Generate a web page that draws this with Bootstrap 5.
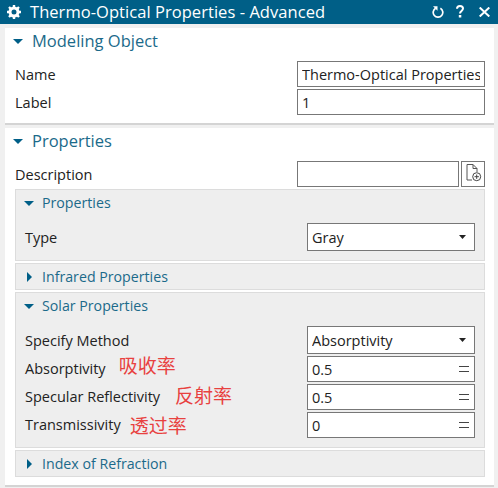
<!DOCTYPE html>
<html lang="en">
<head>
<meta charset="utf-8">
<title>Thermo-Optical Properties - Advanced</title>
<link href="https://cdn.jsdelivr.net/npm/bootstrap@5.3.0/dist/css/bootstrap.min.css" rel="stylesheet">
<style>
html,body{height:488px;overflow:hidden}
body{background:#f0f0f0;font-family:"Open Sans","Noto Sans","Liberation Sans",sans-serif;font-size:14.5px;line-height:20px;color:#222}
.tbar{height:24px;background:#005f87;color:#fff;font-size:16.5px;letter-spacing:.05px;padding:0 8px 1px 7px}
.tbar .ttl{margin-left:9px}
.tools{margin-left:auto}
.t-help{margin-left:12px}
.t-close{margin-left:15px}
.panel{background:#fff;margin:4px 4px 0 5px;border-bottom:2px solid #d4d4d4;padding:0 9px 0 10px}
.head{color:#1b6a8a;font-size:16.5px;height:26px}
.p1{height:97px}
.p2{height:359px;margin-top:3px}
.tri{margin-right:9px;margin-left:-2px;flex:none}
.sub{background:#eeeeee;border:1px solid #dcdcdc;padding:0 9px;margin-bottom:2px}
.sub.top{margin-top:2px}
.sub .head{font-size:14.2px;height:26px}
.sub .head.shut{height:25px}
.sub .tri{margin-left:-1px;margin-right:8px}
.sub .tri.side{margin-left:2px;margin-right:10px}
.line{height:28px;margin-top:7px}
.fld{height:26px;margin-top:2px}
.fld.first{margin-top:7px}
.endrow{margin-bottom:9px}
.form-control.ctl,.form-select.ctl{border:1px solid #777;border-radius:0;font-size:14.5px;line-height:20px;color:#222;padding:0 4px;height:26px;box-shadow:none;background-color:#fff}
.wide{width:188px;flex:none}
.mid{width:168px;flex:none}
.desc{width:162px;flex:none}
.form-select.ctl{height:28px;padding:1px 20px 0 4px;background-image:url("data:image/svg+xml,%3Csvg xmlns='http://www.w3.org/2000/svg' width='7' height='4'%3E%3Cpath d='M0 0h7L3.500 4z' fill='%23222'/%3E%3C/svg%3E");background-position:right 8px center;background-size:7px 4px}
.docbtn{width:24px;height:26px;border:1px solid #777;margin-left:2px;background:#fff;padding:0;flex:none}
.eqw{position:relative}
.eqmark{position:absolute;right:6px;top:10px;width:10px;height:6px;border-top:1px solid #444;border-bottom:1px solid #444}
.note{color:#e8413f;font-family:"Noto Sans CJK SC",sans-serif;font-size:19px;line-height:0;position:relative}
.n1{margin-left:13px;top:-1px}
.n2{margin-left:15px;top:1px}
.n3{margin-left:9px;top:3px}
.lbl{flex:1 1 auto;min-width:0}
.low{padding-top:2px}
</style>
</head>
<body>
<div class="tbar d-flex align-items-center">
  <svg width="14" height="14" viewBox="0 0 14 14"><circle cx="7" cy="7" r="4" fill="none" stroke="#fff" stroke-width="3"/><g stroke="#fff" stroke-width="2.4"><path d="M7 0v2.500M7 11.500V14M0 7h2.500M11.500 7H14M2 2l1.800 1.800M10.200 10.200L12 12M12 2l-1.800 1.800M3.800 10.200L2 12"/></g></svg>
  <span class="ttl">Thermo-Optical Properties - Advanced</span>
  <div class="tools d-flex align-items-center">
    <svg width="12" height="12" viewBox="0 0 12 12"><path d="M3.600 2.200A4.800 4.800 0 1 0 8.400 2.200" fill="none" stroke="#fff" stroke-width="1.700"/><path d="M1 .2h4.500v4.500z" fill="#fff"/></svg>
    <svg class="t-help" width="8" height="13" viewBox="0 0 8 13"><path d="M1 3.800C1 2 2.300 1 4 1s3 1 3 2.600c0 2.400-3 2.300-3 4.900" fill="none" stroke="#fff" stroke-width="2"/><rect x="2.800" y="10" width="2.500" height="2.500" fill="#fff"/></svg>
    <svg class="t-close" width="11" height="10" viewBox="0 0 11 10"><path d="M.7.500l9.600 9M10.300.500l-9.600 9" stroke="#fff" stroke-width="2"/></svg>
  </div>
</div>

<section class="panel p1">
  <div class="head d-flex align-items-center"><svg class="tri" width="10" height="5" viewBox="0 0 10 5"><path d="M0 0h10L5 5z" fill="#005f87"/></svg>Modeling Object</div>
  <div class="d-flex align-items-center fld first"><span class="lbl low">Name</span><input class="form-control ctl wide" value="Thermo-Optical Properties" readonly></div>
  <div class="d-flex align-items-center fld"><span class="lbl low">Label</span><input class="form-control ctl wide" value="1" readonly></div>
</section>

<section class="panel p2">
  <div class="head d-flex align-items-center"><svg class="tri" width="10" height="5" viewBox="0 0 10 5"><path d="M0 0h10L5 5z" fill="#005f87"/></svg>Properties</div>
  <div class="d-flex align-items-center fld first"><span class="lbl low">Description</span><input class="form-control ctl desc" readonly>
    <button class="docbtn d-flex align-items-center justify-content-center" type="button" aria-label="Add file"><svg width="18" height="20" viewBox="0 0 18 20"><path d="M8 16H3V.5h6l4 4V8M9 .5v4h4" fill="none" stroke="#555"/><circle cx="12.700" cy="12.700" r="4" fill="#fff" stroke="#444"/><path d="M10.500 12.700h4.400M12.700 10.500v4.400" stroke="#444"/></svg></button></div>

  <div class="sub top">
    <div class="head d-flex align-items-center"><svg class="tri" width="10" height="5" viewBox="0 0 10 5"><path d="M0 0h10L5 5z" fill="#005f87"/></svg>Properties</div>
    <div class="d-flex align-items-center line endrow"><span class="lbl low">Type</span><select class="form-select ctl mid"><option>Gray</option></select></div>
  </div>
  <div class="sub">
    <div class="head shut d-flex align-items-center"><svg class="tri side" width="5" height="10" viewBox="0 0 5 10"><path d="M0 0v10l5-5z" fill="#005f87"/></svg>Infrared Properties</div>
  </div>
  <div class="sub">
    <div class="head d-flex align-items-center"><svg class="tri" width="10" height="5" viewBox="0 0 10 5"><path d="M0 0h10L5 5z" fill="#005f87"/></svg>Solar Properties</div>
    <div class="d-flex align-items-center line"><span class="lbl low">Specify Method</span><select class="form-select ctl mid"><option>Absorptivity</option></select></div>
    <div class="d-flex align-items-center fld"><span class="lbl">Absorptivity<span class="note n1">吸收率</span></span><div class="eqw mid"><input class="form-control ctl" value="0.5" readonly><span class="eqmark"></span></div></div>
    <div class="d-flex align-items-center fld"><span class="lbl">Specular Reflectivity<span class="note n2">反射率</span></span><div class="eqw mid"><input class="form-control ctl" value="0.5" readonly><span class="eqmark"></span></div></div>
    <div class="d-flex align-items-center fld endrow"><span class="lbl">Transmissivity<span class="note n3">透过率</span></span><div class="eqw mid"><input class="form-control ctl" value="0" readonly><span class="eqmark"></span></div></div>
  </div>
  <div class="sub">
    <div class="head shut d-flex align-items-center"><svg class="tri side" width="5" height="10" viewBox="0 0 5 10"><path d="M0 0v10l5-5z" fill="#005f87"/></svg>Index of Refraction</div>
  </div>
</section>
<script src="https://cdn.jsdelivr.net/npm/bootstrap@5.3.0/dist/js/bootstrap.bundle.min.js"></script>
</body>
</html>
